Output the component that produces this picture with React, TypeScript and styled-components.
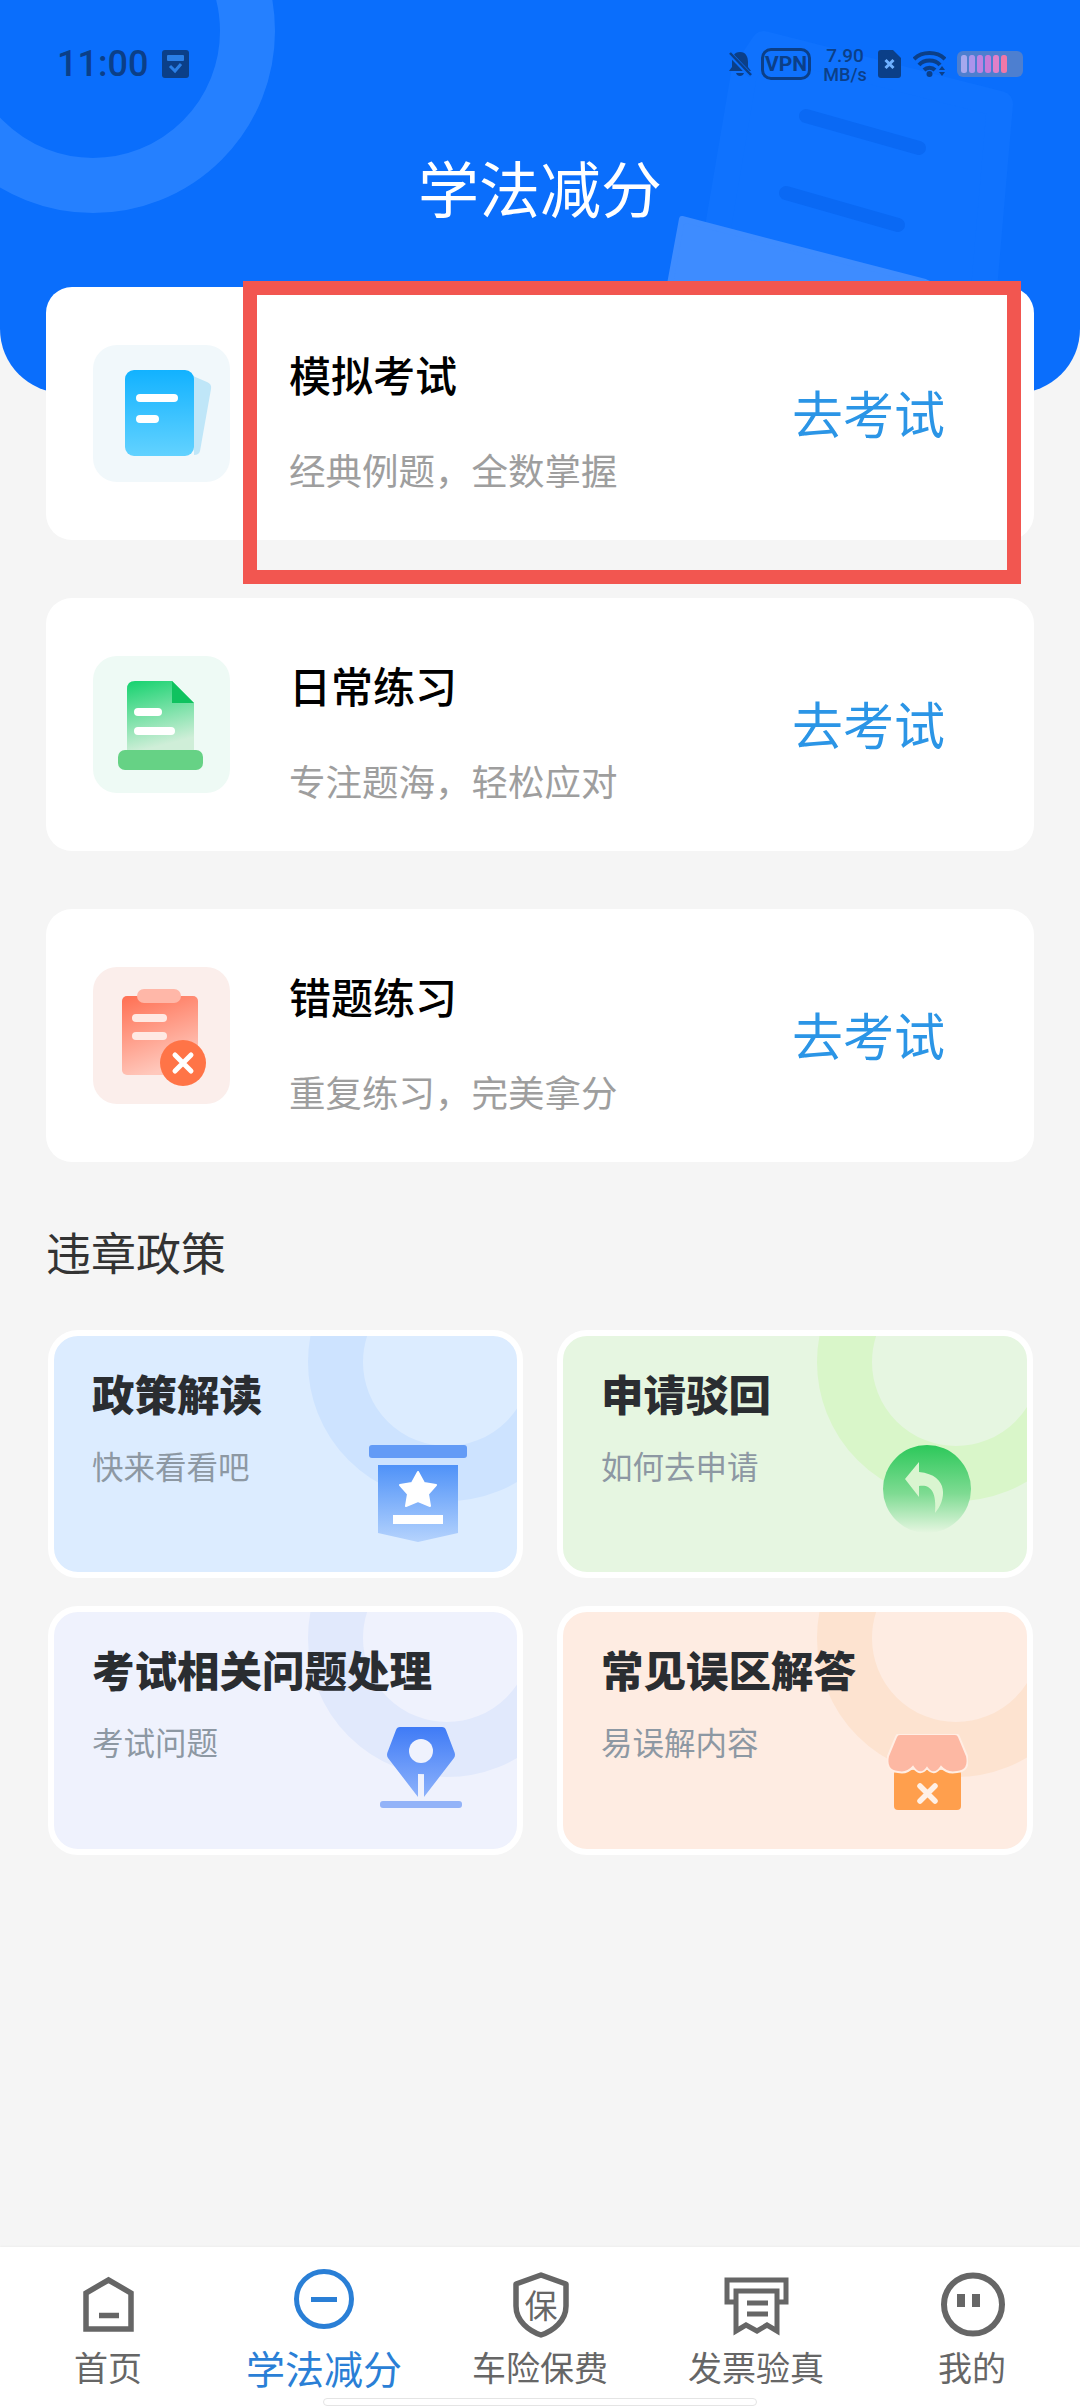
import React from "react";
import styled, { createGlobalStyle } from "styled-components";

const CJK = `"Noto Sans CJK SC", "Noto Sans", sans-serif`;

const Global = createGlobalStyle`
  html, body { margin: 0; padding: 0; background: #f5f5f5; }
  * { box-sizing: border-box; }
  body { font-family: ${CJK}; }
`;

const Page = styled.div`
  position: relative;
  width: 1080px;
  height: 2408px;
  display: flex;
  flex-direction: column;
  overflow: hidden;
  background: #f5f5f5;
`;

const Header = styled.header`
  position: relative;
  height: 393px;
  flex: none;
  overflow: hidden;
  background: #0a6efc;
  border-radius: 0 0 64px 64px;
  display: flex;
  flex-direction: column;
`;

const HeaderArt = styled.svg`
  position: absolute;
  inset: 0;
`;

const StatusBar = styled.div`
  position: relative;
  display: flex;
  justify-content: space-between;
  align-items: center;
  height: 36px;
  margin-top: 46px;
  padding: 0 57px;
  color: #0b3f88;
`;

const StatusGroup = styled.div`
  display: flex;
  align-items: center;
`;

const Clock = styled.span`
  width: 89px;
  font-family: Roboto, sans-serif;
  font-weight: 500;
  font-size: 36px;
  line-height: 36px;
  margin-right: 16px;
  white-space: nowrap;
`;

const VpnBadge = styled.span`
  width: 50px;
  height: 32px;
  margin: 0 13px 0 9px;
  border: 3px solid #0b3f88;
  border-radius: 10px;
  display: flex;
  align-items: center;
  justify-content: center;
  font-family: Roboto, sans-serif;
  font-weight: 700;
  font-size: 21px;
  line-height: 1;
`;

const Speed = styled.span`
  width: 42px;
  margin-right: 12px;
  display: flex;
  flex-direction: column;
  align-items: center;
  font-family: Roboto, sans-serif;
  font-weight: 500;
  white-space: nowrap;
`;

const SpeedValue = styled.span`
  font-size: 19px;
  line-height: 22px;
`;

const SpeedUnit = styled.span`
  font-size: 18px;
  line-height: 16px;
`;

const StatusSpacer = styled.span<{ $w: number }>`
  width: ${(p) => p.$w}px;
`;

const HeaderTitle = styled.h1`
  position: relative;
  margin: 65px 0 0;
  text-align: center;
  color: #fff;
  font-weight: 400;
  font-size: 61px;
  line-height: 80px;
`;

const Main = styled.main`
  position: relative;
  margin-top: -106px;
  padding: 0 46px;
  display: flex;
  flex-direction: column;
`;

const CardList = styled.div`
  display: flex;
  flex-direction: column;
  gap: 58px;
`;

const Card = styled.section`
  height: 253px;
  padding: 0 89px 0 47px;
  display: flex;
  align-items: center;
  background: #fff;
  border-radius: 26px;
`;

const CardIcon = styled.div<{ $bg: string }>`
  width: 137px;
  height: 137px;
  flex: none;
  border-radius: 24px;
  background: ${(p) => p.$bg};
  svg { display: block; }
`;

const CardText = styled.div`
  align-self: flex-start;
  margin-left: 59px;
  padding-top: 59px;
`;

const CardTitle = styled.div`
  color: #000;
  font-size: 42px;
  line-height: 56px;
  font-weight: 500;
`;

const CardSub = styled.div`
  margin-top: 44px;
  color: #9e9e9e;
  font-size: 36.5px;
  line-height: 48px;
`;

const CardAction = styled.div`
  margin-left: auto;
  margin-bottom: 3px;
  color: #2b95e6;
  font-size: 51px;
  line-height: 64px;
`;

const SectionTitle = styled.h2`
  margin: 60px 0 0;
  color: #333;
  font-weight: 400;
  font-size: 45px;
  line-height: 60px;
`;

const TileGrid = styled.div`
  margin: 48px 1px 0 2px;
  display: grid;
  grid-template-columns: 475px 476px;
  grid-template-rows: 248px 249px;
  column-gap: 34px;
  row-gap: 28px;
`;

const Tile = styled.article<{ $bg: string }>`
  position: relative;
  overflow: hidden;
  padding: 29px 0 0 38px;
  border: 6px solid #fff;
  border-radius: 30px;
  background: ${(p) => p.$bg};
`;

const TileRing = styled.div<{ $color: string }>`
  position: absolute;
  left: 254px;
  top: -113px;
  width: 278px;
  height: 278px;
  border: 55px solid ${(p) => p.$color};
  border-radius: 50%;
`;

const TileTitle = styled.div`
  position: relative;
  color: #2a2d31;
  font-weight: 900;
  font-size: 42.5px;
  line-height: 56px;
  white-space: nowrap;
`;

const TileSub = styled.div`
  position: relative;
  margin-top: 22px;
  color: #8d98a3;
  font-size: 31.5px;
  line-height: 44px;
`;

const TileIcon = styled.div<{ $right: number; $bottom: number }>`
  position: absolute;
  right: ${(p) => p.$right}px;
  bottom: ${(p) => p.$bottom}px;
  svg { display: block; }
`;

const Nav = styled.nav`
  position: absolute;
  left: 0;
  right: 0;
  bottom: 0;
  height: 161px;
  display: grid;
  grid-template-columns: repeat(5, 216px);
  background: #fff;
  box-shadow: 0 -1px 2px rgba(0, 0, 0, 0.03);
`;

const NavItem = styled.div<{ $active?: boolean }>`
  padding-top: 17px;
  display: flex;
  flex-direction: column;
  align-items: center;
  color: ${(p) => (p.$active ? "#2a7fd6" : "#666")};
  svg { display: block; }
`;

const NavLabel = styled.span<{ $active?: boolean }>`
  font-size: ${(p) => (p.$active ? 39 : 34)}px;
  line-height: 46px;
  white-space: nowrap;
`;

const HomeBar = styled.div`
  position: absolute;
  left: 323px;
  bottom: 2px;
  width: 434px;
  height: 8px;
  background: #fff;
  border: 1px solid #e4e4e4;
  border-radius: 4px;
`;

const RedFrame = styled.div`
  position: absolute;
  left: 243px;
  top: 281px;
  width: 778px;
  height: 303px;
  border: 14px solid #f25650;
`;

const ink = "#0b3f88";

const HeaderDecor = () => (
  <HeaderArt width={1080} height={393} viewBox="0 0 1080 393">
    <circle cx={93} cy={31} r={154.5} fill="none" stroke="#2580ff" strokeWidth={55} />
    <path d="M764 44 L1000 104 L975 393 L690 393 L744 74 Z" fill="#0f72fe" stroke="#0f72fe" strokeWidth={26} strokeLinejoin="round" />
    <path d="M806 116 L919 148 M786 193 L898 225" stroke="#0a69f4" strokeWidth={14} strokeLinecap="round" />
    <path d="M682 219 L925 282 L985 310 L975 393 L650 393 Z" fill="#3e8cff" stroke="#3e8cff" strokeWidth={6} strokeLinejoin="round" />
  </HeaderArt>
);

const CalendarGlyph = () => (
  <svg width={27} height={28} viewBox="0 0 27 28">
    <rect width={27} height={28} rx={3} fill={ink} />
    <rect x={5} y={5} width={17} height={6} rx={1} fill="#2a7fe6" />
    <path d="M8 16 L13 21 L19 14" fill="none" stroke="#2a7fe6" strokeWidth={3} />
  </svg>
);

const BellOff = () => (
  <svg width={24} height={26} viewBox="0 0 24 26">
    <path d="M12 1 C6 1 4 6 4 11 V16 L1 20 H23 L20 16 V11 C20 6 18 1 12 1 Z M8 22 H16 C15 26 9 26 8 22 Z" fill={ink} />
    <path d="M1 2 L23 25" stroke="#0a6efc" strokeWidth={5} />
    <path d="M2 2 L23 24" stroke={ink} strokeWidth={2.5} />
  </svg>
);

const SimX = () => (
  <svg width={23} height={28} viewBox="0 0 23 28">
    <path d="M3 0 H15 L23 8 V25 Q23 28 20 28 H3 Q0 28 0 25 V3 Q0 0 3 0 Z" fill={ink} />
    <path d="M7.5 10 L15.5 18 M15.5 10 L7.5 18" stroke="#6fb0ff" strokeWidth={3} />
  </svg>
);

const Wifi = () => (
  <svg width={33} height={26} viewBox="0 0 33 26" fill="none" stroke={ink} strokeWidth={4}>
    <path d="M1 8 C9 0 24 0 32 8" />
    <path d="M6 14 C11 8 22 8 27 14" />
    <path d="M11 19 C14 16 19 16 22 19" />
    <circle cx={16.5} cy={23} r={3} fill={ink} stroke="none" />
    <path d="M29 15 L32 19 H26 Z M26 21 H32 L29 25 Z" fill={ink} stroke="none" />
  </svg>
);

const batteryColors = ["#a6a8ee", "#ab94ec", "#bf82e2", "#c97ad8", "#e080c8", "#ef78a8"];

const Battery = () => (
  <svg width={66} height={26} viewBox="0 0 66 26">
    <rect width={66} height={26} rx={6} fill="#4d7fd0" />
    {batteryColors.map((c, i) => (
      <rect key={c} x={4 + i * 8} y={4} width={6} height={18} rx={2.5} fill={c} />
    ))}
  </svg>
);

const BlueDoc = () => (
  <svg width={137} height={137} viewBox="0 0 137 137">
    <defs>
      <linearGradient id="bd" x1="0" y1="0" x2="0" y2="1">
        <stop offset="0" stopColor="#12b2ff" />
        <stop offset="1" stopColor="#62d2ff" />
      </linearGradient>
    </defs>
    <path d="M100 31 L114 37 Q119 39 118 44 L107 106 Q106 110 101 110 Z" fill="#bfe6f8" />
    <rect x={32} y={25} width={69} height={86} rx={9} fill="url(#bd)" />
    <rect x={43} y={49} width={42} height={8} rx={4} fill="#fff" />
    <rect x={43} y={70} width={23} height={8} rx={4} fill="#fff" />
  </svg>
);

const GreenDoc = () => (
  <svg width={137} height={137} viewBox="0 0 137 137">
    <defs>
      <linearGradient id="gd" x1="0" y1="0" x2="0.25" y2="1">
        <stop offset="0" stopColor="#15d26e" />
        <stop offset="1" stopColor="#cfeed8" />
      </linearGradient>
    </defs>
    <path d="M42 25 H79 L101 47 V94 H34 V33 Q34 25 42 25 Z" fill="url(#gd)" />
    <path d="M79 25 L101 47 H79 Z" fill="#0fc25f" />
    <rect x={25} y={94} width={85} height={20} rx={7} fill="#66d285" />
    <rect x={41} y={52} width={28} height={8} rx={4} fill="#fff" />
    <rect x={41} y={71} width={41} height={8} rx={4} fill="#fff" />
  </svg>
);

const RedClip = () => (
  <svg width={137} height={137} viewBox="0 0 137 137">
    <defs>
      <linearGradient id="rd" x1="0" y1="0" x2="0.35" y2="1">
        <stop offset="0" stopColor="#ff6f52" />
        <stop offset="1" stopColor="#ffc8bc" />
      </linearGradient>
    </defs>
    <rect x={29} y={29} width={76} height={79} rx={5} fill="url(#rd)" />
    <rect x={44} y={22} width={44} height={14} rx={7} fill="#ffb7a8" />
    <rect x={39} y={47} width={35} height={8} rx={4} fill="#ffe9e3" />
    <rect x={39} y={65} width={35} height={8} rx={4} fill="#ffe9e3" />
    <circle cx={90} cy={96} r={23} fill="#ff7447" />
    <path d="M82 88 L98 104 M98 88 L82 104" stroke="#fff" strokeWidth={5} strokeLinecap="round" />
  </svg>
);

const StarBanner = () => (
  <svg width={98} height={97} viewBox="0 0 98 97">
    <defs>
      <linearGradient id="sb" x1="0" y1="0" x2="0" y2="1">
        <stop offset="0" stopColor="#4f92f8" />
        <stop offset="1" stopColor="#b5d3fd" />
      </linearGradient>
    </defs>
    <rect width={98} height={13} rx={3} fill="#639bf6" />
    <path d="M9 20 H89 V88 L49 97 L9 88 Z" fill="url(#sb)" />
    <path d="M49 27 L55 38 L67 40 L59 49 L61 61 L49 56 L37 61 L39 49 L31 40 L43 38 Z" fill="#fff" stroke="#fff" strokeWidth={2} strokeLinejoin="round" />
    <rect x={24} y={70} width={50} height={9} fill="#fff" />
  </svg>
);

const ReplyBall = () => (
  <svg width={88} height={90} viewBox="0 0 88 90">
    <defs>
      <linearGradient id="rb" x1="0" y1="0" x2="0" y2="1">
        <stop offset="0" stopColor="#2cc85a" />
        <stop offset="0.55" stopColor="#7edb92" />
        <stop offset="1" stopColor="#e6f6e1" />
      </linearGradient>
    </defs>
    <circle cx={44} cy={44} r={44} fill="url(#rb)" />
    <path d="M36 17 L22 34 L36 52 V41 C47 39 54 46 52 68 C63 56 67 30 36 27 Z" fill="#d9f5d0" />
  </svg>
);

const PenNib = () => (
  <svg width={82} height={81} viewBox="0 0 82 81">
    <defs>
      <linearGradient id="pn" x1="0" y1="0" x2="0" y2="1">
        <stop offset="0" stopColor="#3f7bf6" />
        <stop offset="1" stopColor="#8db2fb" />
      </linearGradient>
    </defs>
    <path d="M20 0 H62 Q65 0 66 3 L74 24 Q76 28 74 31 L44 70 V47 H38 V70 L8 31 Q6 28 8 24 L16 3 Q17 0 20 0 Z" fill="url(#pn)" />
    <circle cx={41} cy={24} r={12} fill="#eff2fd" />
    <rect y={74} width={82} height={7} rx={3} fill="#93b3f8" />
  </svg>
);

const Store = () => (
  <svg width={81} height={76} viewBox="0 0 81 76">
    <rect x={7} y={36} width={67} height={40} rx={4} fill="#ff9f4d" />
    <path d="M13 0 H68 Q71 0 72 3 L80 22 Q83 37 70 38 Q60 40 54 33 Q47 43 40 34 Q33 43 26 33 Q20 40 11 38 Q-2 37 1 22 L9 3 Q10 0 13 0 Z" fill="#fdb8a3" stroke="#ffeee4" strokeWidth={2} />
    <path d="M33 52 L48 67 M48 52 L33 67" stroke="#fff0e6" strokeWidth={5.5} strokeLinecap="round" />
  </svg>
);

const NavGlyph = ({ children }: { children: React.ReactNode }) => (
  <svg width={80} height={80} viewBox="0 0 80 80" fill="none" stroke="currentColor">
    {children}
  </svg>
);

const exams = [
  { title: "模拟考试", sub: "经典例题，全数掌握", bg: "#f1f8fb", Icon: BlueDoc },
  { title: "日常练习", sub: "专注题海，轻松应对", bg: "#eefaf5", Icon: GreenDoc },
  { title: "错题练习", sub: "重复练习，完美拿分", bg: "#fbeeeb", Icon: RedClip },
];

const tiles = [
  { title: "政策解读", sub: "快来看看吧", bg: "#dcecff", ring: "#cde3ff", right: 50, bottom: 30, Icon: StarBanner },
  { title: "申请驳回", sub: "如何去申请", bg: "#e6f6e1", ring: "#d9f6c9", right: 56, bottom: 37, Icon: ReplyBall },
  { title: "考试相关问题处理", sub: "考试问题", bg: "#eff2fd", ring: "#e1e9fc", right: 55, bottom: 41, Icon: PenNib },
  { title: "常见误区解答", sub: "易误解内容", bg: "#feece2", ring: "#fde3d0", right: 59, bottom: 39, Icon: Store },
];

export default function App() {
  return (
    <Page>
      <Global />
      <Header>
        <HeaderDecor />
        <StatusBar>
          <StatusGroup>
            <Clock>11:00</Clock>
            <CalendarGlyph />
          </StatusGroup>
          <StatusGroup>
            <BellOff />
            <VpnBadge>VPN</VpnBadge>
            <Speed>
              <SpeedValue>7.90</SpeedValue>
              <SpeedUnit>MB/s</SpeedUnit>
            </Speed>
            <SimX />
            <StatusSpacer $w={12} />
            <Wifi />
            <StatusSpacer $w={11} />
            <Battery />
          </StatusGroup>
        </StatusBar>
        <HeaderTitle>学法减分</HeaderTitle>
      </Header>

      <Main>
        <CardList>
          {exams.map(({ title, sub, bg, Icon }) => (
            <Card key={title}>
              <CardIcon $bg={bg}>
                <Icon />
              </CardIcon>
              <CardText>
                <CardTitle>{title}</CardTitle>
                <CardSub>{sub}</CardSub>
              </CardText>
              <CardAction>去考试</CardAction>
            </Card>
          ))}
        </CardList>

        <SectionTitle>违章政策</SectionTitle>

        <TileGrid>
          {tiles.map(({ title, sub, bg, ring, right, bottom, Icon }) => (
            <Tile key={title} $bg={bg}>
              <TileRing $color={ring} />
              <TileTitle>{title}</TileTitle>
              <TileSub>{sub}</TileSub>
              <TileIcon $right={right} $bottom={bottom}>
                <Icon />
              </TileIcon>
            </Tile>
          ))}
        </TileGrid>
      </Main>

      <Nav>
        <NavItem>
          <NavGlyph>
            <path d="M18 65 V29 L40.5 16 L63 29 V65 Z" strokeWidth={5.5} strokeLinejoin="miter" />
            <path d="M31 51.5 H51" strokeWidth={5.5} />
          </NavGlyph>
          <NavLabel>首页</NavLabel>
        </NavItem>
        <NavItem $active>
          <NavGlyph>
            <circle cx={40} cy={35} r={27.5} strokeWidth={5} />
            <path d="M27 35.5 H53" strokeWidth={5} />
          </NavGlyph>
          <NavLabel $active>学法减分</NavLabel>
        </NavItem>
        <NavItem>
          <NavGlyph>
            <path d="M41 11 L66 20 V42 C66 57 53 67 41 71 C29 67 16 57 16 42 V20 Z" strokeWidth={5.5} strokeLinejoin="round" />
            <text x={41} y={54} textAnchor="middle" fontSize={33} fill="currentColor" stroke="none" fontFamily={CJK}>
              保
            </text>
          </NavGlyph>
          <NavLabel>车险保费</NavLabel>
        </NavItem>
        <NavItem>
          <NavGlyph>
            <path d="M20 38 H11 V16 H70 V38 H61" strokeWidth={5} />
            <path d="M20 27 H61 V67 L51 61 L41 67 L30 61 L20 67 Z" strokeWidth={5} />
            <path d="M31 39 H52 M31 50 H52" strokeWidth={5} />
          </NavGlyph>
          <NavLabel>发票验真</NavLabel>
        </NavItem>
        <NavItem>
          <NavGlyph>
            <circle cx={41} cy={40.5} r={29} strokeWidth={6} />
            <path d="M29 30 V43 M44 30 V43" strokeWidth={8} />
          </NavGlyph>
          <NavLabel>我的</NavLabel>
        </NavItem>
      </Nav>
      <HomeBar />
      <RedFrame />
    </Page>
  );
}
